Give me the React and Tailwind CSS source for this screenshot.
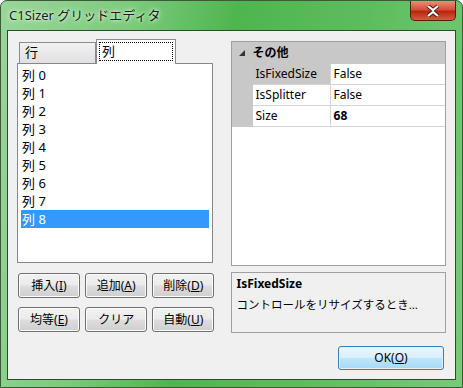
import React from "react";

const font = { fontFamily: '"Noto Sans", "Noto Sans CJK JP", sans-serif' };

function Btn({ label, u, rest = ")", className = "" }) {
  return (
    <button
      className={`h-[25px] w-[62px] rounded-[3px] border border-[#707070] bg-[linear-gradient(#f2f2f2_0%,#ebebeb_48%,#dddddd_52%,#cfcfcf_100%)] text-[12px] text-black shadow-[inset_0_0_0_1px_#fcfcfc] ${className}`}
    >
      {label}
      {u && (
        <>
          (<span className="underline">{u}</span>
          {rest}
        </>
      )}
    </button>
  );
}

const rows = ["列 0", "列 1", "列 2", "列 3", "列 4", "列 5", "列 6", "列 7", "列 8"];

const props = [
  { name: "IsFixedSize", value: "False", selected: true },
  { name: "IsSplitter", value: "False" },
  { name: "Size", value: "68", bold: true },
];

export default function App() {
  return (
    <div
      className="flex h-[388px] w-[463px] flex-col overflow-hidden rounded-t-[7px] border border-[#3a5a3a] bg-[linear-gradient(100deg,#9ad59a_0%,#7ccb7c_25%,#4fb54f_45%,#5dbd5d_70%,#79c979_100%)] text-[12px] text-black"
      style={font}
    >
      {/* title bar */}
      <div className="flex h-[29px] shrink-0 items-start">
        <div className="pl-[8px] pt-[5px] text-[13px] text-[#1c1c1c] [text-shadow:0_0_6px_#e8ffe8,0_0_3px_#e8ffe8]">
          C1Sizer グリッドエディタ
        </div>
        <div className="ml-auto mr-[6px] flex h-[20px] w-[46px] items-center justify-center rounded-b-[5px] border border-t-0 border-[#5a1a12] bg-[linear-gradient(#e8907a_0%,#d4503a_45%,#b8260f_55%,#d85a42_100%)]">
          <svg width="14" height="12" viewBox="0 0 14 12">
            <path
              d="M2 1 L7 5 L12 1 M2 11 L7 7 L12 11"
              stroke="#3a1a14"
              strokeWidth="4"
              fill="none"
            />
            <path
              d="M2 1 L7 5 L12 1 M2 11 L7 7 L12 11"
              stroke="#ffffff"
              strokeWidth="2.2"
              fill="none"
            />
          </svg>
        </div>
      </div>

      {/* client area */}
      <div className="mx-[6px] mb-[7px] flex flex-1 flex-col border border-[#2e4a2e] bg-[#f0f0f0] pl-[9px] pr-[9px] pt-[8px]">
        <div className="flex gap-[18px]">
          {/* left column */}
          <div className="flex w-[196px] flex-col">
            <div className="flex h-[24px] items-end">
              <div className="ml-[2px] flex h-[21px] w-[77px] items-center border border-b-0 border-[#898c95] bg-[linear-gradient(#f2f2f2,#e0e0e0)] pl-[5px] text-[13px]">
                行
              </div>
              <div className="relative z-10 -mb-px flex h-[25px] w-[80px] items-start border border-b-0 border-[#898c95] bg-white px-[2px] pt-[2px] text-[13px]">
                <div className="h-[19px] w-full border border-dotted border-black pl-[2px] leading-[17px]">
                  列
                </div>
              </div>
            </div>
            <div className="h-[200px] border border-[#828790] bg-white px-[3px] pt-[2px]">
              {rows.map((r, i) => (
                <div
                  key={r}
                  className={`h-[18px] pl-[1px] text-[13px] leading-[18px] ${
                    i === 8 ? "bg-[#3399ff] text-white" : ""
                  }`}
                >
                  {r}
                </div>
              ))}
            </div>
            <div className="mt-[10px] grid grid-cols-3 gap-x-[7px] gap-y-[9px] pl-[1px]">
              <Btn label="挿入" u="I" />
              <Btn label="追加" u="A" />
              <Btn label="削除" u="D" />
              <Btn label="均等" u="E" />
              <Btn label="クリア" />
              <Btn label="自動" u="U" />
            </div>
          </div>

          {/* right column */}
          <div className="flex w-[216px] flex-col pt-[2px]">
            <div className="h-[225px] border border-[#a0a0a0] bg-white">
              <div className="flex h-[22px] items-center bg-[#c8c8c8]">
                <div className="flex w-[21px] justify-center">
                  <svg width="7" height="7" viewBox="0 0 7 7">
                    <path d="M6 0 L6 6 L0 6 Z" fill="#333" />
                  </svg>
                </div>
                <div className="text-[12px] font-bold">その他</div>
              </div>
              {props.map((p) => (
                <div key={p.name} className="flex h-[21px]">
                  <div className="w-[21px] bg-[#c8c8c8]" />
                  <div
                    className={`w-[78px] border-b border-r border-[#d4d4d4] pl-[3px] text-[12px] leading-[20px] ${
                      p.selected ? "bg-[#c8c8c8]" : ""
                    }`}
                  >
                    {p.name}
                  </div>
                  <div
                    className={`flex-1 border-b border-[#d4d4d4] pl-[3px] text-[12px] leading-[20px] ${
                      p.bold ? "font-bold" : ""
                    }`}
                  >
                    {p.value}
                  </div>
                </div>
              ))}
            </div>
            <div className="mt-[6px] h-[61px] border border-[#a0a0a0] bg-[#f0f0f0] px-[5px] pt-[2px]">
              <div className="text-[12px] font-bold">IsFixedSize</div>
              <div className="mt-[3px] whitespace-nowrap text-[11.5px]">
                コントロールをリサイズするとき...
              </div>
            </div>
          </div>
        </div>

        <div className="mt-[13px] flex justify-end pr-[2px]">
          <button className="h-[24px] w-[106px] rounded-[3px] border border-[#3c7fb1] bg-[linear-gradient(#eaf6fd_0%,#d9f0fc_48%,#bee6fd_52%,#a7d9f5_100%)] text-[12px] shadow-[inset_0_0_0_1px_#dff2fc]">
            OK(<span className="underline">O</span>)
          </button>
        </div>
      </div>
    </div>
  );
}
